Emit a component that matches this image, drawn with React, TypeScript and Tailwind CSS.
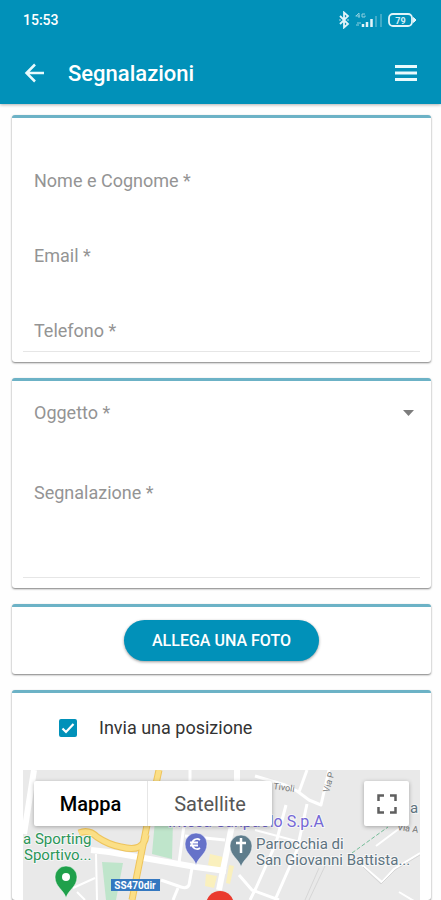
import React from "react";

const cell = "col-start-1 row-start-1";
const labelText = "px-[11px] text-lg leading-6 text-[#949494]";

function Card({ children, className = "" }: { children: React.ReactNode; className?: string }) {
  return (
    <section
      className={`rounded-[3px] border-t-[3px] border-[#6cb2c6] bg-white px-[11px] shadow-[0_1px_2px_rgba(0,0,0,0.5)] ${className}`}
    >
      {children}
    </section>
  );
}

function TextField({ id, label, type, line }: { id: string; label: string; type: string; line?: boolean }) {
  return (
    <div className={`grid h-[75px] items-end border-b ${line ? "border-[#e6e6e6]" : "border-transparent"}`}>
      <label htmlFor={id} className={`${cell} ${labelText} pb-2`}>
        {label}
      </label>
      <input id={id} type={type} className={`${cell} h-10 w-full bg-transparent px-[11px] outline-none`} />
    </div>
  );
}

function StatusBar() {
  return (
    <div className="flex h-10 items-center justify-between pr-6 pl-[23px]">
      <span className="text-sm font-medium">15:53</span>
      <svg width="80" height="18" viewBox="0 0 80 18" fill="none" stroke="#e3f4f9" aria-hidden="true">
        <path d="M3 5l8 8-4 3.500V1.500L11 5l-8 8" strokeWidth="1.800" />
        <path d="M2.500 9h1M10.500 9h1" strokeWidth="1.500" />
        <path d="M26 16v-3M30 16v-5M34.500 16V8" strokeWidth="2.500" />
        <path d="M39 16V5M44 16V3" stroke="#55b4cd" strokeWidth="1.500" />
        <path d="M19 5l3-3v5M18.500 5H23M28 3h-3v3h3V4.500M20 12h4M19 14h3" stroke="#8fcfdf" />
        <rect x="52" y="3" width="23" height="12" rx="4" strokeWidth="1.800" />
        <path d="M76.500 6.500L79 9l-2.500 2.500z" fill="#e3f4f9" />
        <text x="63.500" y="12.500" textAnchor="middle" fontSize="9" fontWeight="700" fill="#d6eff6" stroke="none">
          79
        </text>
      </svg>
    </div>
  );
}

function Pin({ x, y, color, children }: { x: number; y: number; color: string; children?: React.ReactNode }) {
  return (
    <g transform={`translate(${x} ${y})`}>
      <path d="M0 21C-2 13-11 10-11 0A11 11 0 0 1 11 0C11 10 2 13 0 21z" fill={color} stroke="#fff" strokeOpacity="0.5" />
      {children}
    </g>
  );
}

function CityMap() {
  return (
    <svg
      className="block h-[130px] w-full"
      viewBox="0 0 397 130"
      preserveAspectRatio="xMidYMin slice"
      role="img"
      aria-label="Mappa"
    >
      <rect width="397" height="130" fill="#e9e9e9" />
      <path d="M132 50h18l-1 39-20-5zM79 92l21 1-7 37H83z" fill="#bfe5cb" />
      <path d="M187 84l13 3-3 12-12-4zM183 104l11 2-3 12-9-2zM206 95l5 1-4 18-4-1z" fill="#faf0bd" />
      <g fill="none" stroke="#fff" strokeLinejoin="round">
        <path d="M11 0L6 32 1 64" strokeWidth="6" />
        <path d="M68 80l18 2 87 15 30 4" strokeWidth="6" />
        <path d="M214 0v40l-6 20-12 60" strokeWidth="6" />
        <path d="M167 0v40l-6 15-5 38M169 98l-3 17q-2 4-8 2l-20-7M155 118l-5 12M162 66l40 4" strokeWidth="3" />
        <path d="M73 84l1 46M50 118l22-10M54 122l8 8" strokeWidth="2" />
        <path d="M306 0l-8 35-12-5-12-9-12-6-30-9M284 0l-8 22" strokeWidth="3" />
        <path d="M263 35l-10 38-20 45-6 12M284 34l-10 46-22 50M216 105l13 15 27 10" strokeWidth="3" />
        <path d="M339 95l20 17 12-13 26-16M353 76l24-18M376 122l20 12M232 60l60 16" strokeWidth="2" />
      </g>
      <g fill="none" stroke="#d6d6d6" strokeWidth="1">
        <path d="M296 98l-14 32M302 96l-16 34M340 97l18 17 14-14 25-15" />
      </g>
      <g fill="none" strokeLinejoin="round">
        <path d="M136 0l-12 55-15 75M56 63q10-4 18 4 12 8 24 10 12 3 18 0 6-3 7-12" stroke="#eec45c" strokeWidth="7" />
        <path d="M136 0l-12 55-15 75M56 63q10-4 18 4 12 8 24 10 12 3 18 0 6-3 7-12" stroke="#fbdf86" strokeWidth="5" />
      </g>
      <path d="M329 83l36-26" stroke="#74bd98" strokeDasharray="4 2" />
      <g fontSize="9" fill="#777">
        <text x="250" y="19" transform="rotate(8 250 19)">Tivoli</text>
        <text x="306" y="23" transform="rotate(-75 306 23)">Via P</text>
        <text x="374" y="60" transform="rotate(8 374 60)">Via A</text>
      </g>
      <g stroke="#fff" strokeWidth="2" strokeOpacity="0.6" paintOrder="stroke" fontSize="15">
        <text x="301" y="57" textAnchor="end" fill="#7468d6" fontSize="16">
          Intesa Sanpaolo S.p.A
        </text>
        <text x="0" y="74" fill="#2b9659">a Sporting</text>
        <text x="1" y="90" fill="#2b9659">Sportivo...</text>
        <text x="233" y="79" fill="#5d7380">Parrocchia di</text>
        <text x="233" y="95" fill="#5d7380">San Giovanni Battista...</text>
        <text x="387" y="43" fill="#5d7380">a</text>
      </g>
      <rect x="88" y="109" width="49" height="12" fill="#3478c0" />
      <text x="112" y="119" textAnchor="middle" fontSize="10" fontWeight="700" fill="#fff">
        SS470dir
      </text>
      <Pin x={43} y={107} color="#1fa04b">
        <circle r="4" fill="#fff" />
      </Pin>
      <Pin x={173} y={74} color="#6672c9">
        <path d="M4-4A5 5 0 1 0 4 4M-6-1.500H2M-6 1.500H2" fill="none" stroke="#fff" strokeWidth="1.800" />
      </Pin>
      <Pin x={218} y={76} color="#5f7d8c">
        <path d="M0-8V7M-5-3H5" stroke="#fff" strokeWidth="2.500" />
      </Pin>
      <circle cx="197" cy="135" r="14" fill="#ea3a2e" />
    </svg>
  );
}

export default function App() {
  return (
    <div className="bg-[#fefefe] font-[Roboto,sans-serif]">
      <header className="bg-[#0191b9] text-white shadow-[0_1px_3px_rgba(0,0,0,0.3)]">
        <StatusBar />
        <div className="flex h-16 items-center gap-6 px-6 pt-0.5">
          <button type="button" aria-label="Indietro">
            <svg width="20" height="20" viewBox="0 0 20 20" fill="none" stroke="#e8fafd" strokeWidth="2.500" className="block">
              <path d="M20 10H3M11 1.500L2.500 10l8.500 8.500" />
            </svg>
          </button>
          <h1 className="flex-1 text-[22px] font-medium">Segnalazioni</h1>
          <button type="button" aria-label="Menu">
            <svg width="22" height="16" viewBox="0 0 22 16" fill="#e8fafd" className="block">
              <path d="M0 0h22v3H0zM0 6.500h22v3H0zM0 13h22v3H0z" />
            </svg>
          </button>
        </div>
      </header>
      <main className="flex flex-col gap-4 pt-[11px] pr-[10px] pl-3">
        <Card className="pt-[9px] pb-[10px]">
          <TextField id="nome" label="Nome e Cognome *" type="text" />
          <TextField id="email" label="Email *" type="email" />
          <TextField id="telefono" label="Telefono *" type="tel" line />
        </Card>
        <Card className="pb-[10px]">
          <div className="grid h-16 items-center">
            <label htmlFor="oggetto" className={`${cell} ${labelText}`}>
              Oggetto *
            </label>
            <svg width="11" height="6" viewBox="0 0 11 6" className={`${cell} mr-[6px] justify-self-end`}>
              <path d="M0 0h11L5.500 6z" fill="#7d7d7d" />
            </svg>
            <select id="oggetto" className={`${cell} h-10 w-full appearance-none bg-transparent outline-none`} />
          </div>
          <div className="grid h-[133px] border-b border-[#e6e6e6] pt-9">
            <label htmlFor="segnalazione" className={`${cell} ${labelText}`}>
              Segnalazione *
            </label>
            <textarea
              id="segnalazione"
              className={`${cell} w-full resize-none bg-transparent px-[11px] outline-none`}
            />
          </div>
        </Card>
        <Card className="flex justify-center py-[13px]">
          <button
            type="button"
            className="h-[41px] rounded-full bg-[#0191b9] px-7 font-medium text-white shadow-[0_1px_3px_rgba(0,0,0,0.4)]"
          >
            ALLEGA UNA FOTO
          </button>
        </Card>
        <Card>
          <div className="flex h-[69px] items-center gap-[22px] pl-9">
            <span className="grid">
              <input
                id="posizione"
                type="checkbox"
                defaultChecked
                className={`${cell} size-[18px] appearance-none rounded-xs border-2 border-[#0191b9] checked:bg-[#0191b9]`}
              />
              <svg
                viewBox="0 0 18 18"
                fill="none"
                stroke="#fff"
                strokeWidth="2.200"
                className={`${cell} pointer-events-none size-[18px]`}
              >
                <path d="M3.500 9.500l3.500 3.500 7.500-8" />
              </svg>
            </span>
            <label htmlFor="posizione" className="text-lg leading-6 text-[#333]">
              Invia una posizione
            </label>
          </div>
          <div className="relative mt-2">
            <CityMap />
            <div className="absolute inset-x-[11px] top-[11px] flex justify-between">
              <div className="flex h-[45px] rounded-xs bg-white text-xl shadow-[0_1px_4px_rgba(0,0,0,0.3)]">
                <button type="button" className="w-[113px] font-medium text-black">
                  Mappa
                </button>
                <button type="button" className="w-[125px] border-l border-[#e6e6e6] text-[#565656]">
                  Satellite
                </button>
              </div>
              <button
                type="button"
                aria-label="Schermo intero"
                className="flex size-[45px] items-center justify-center rounded-xs bg-white shadow-[0_1px_4px_rgba(0,0,0,0.3)]"
              >
                <svg width="20" height="20" viewBox="0 0 20 20" fill="none" stroke="#5f5f5f" strokeWidth="2.500">
                  <path d="M1.500 7V1.500H7M13 1.500h5.500V7M18.500 13v5.500H13M7 18.500H1.500V13" />
                </svg>
              </button>
            </div>
          </div>
        </Card>
      </main>
    </div>
  );
}
